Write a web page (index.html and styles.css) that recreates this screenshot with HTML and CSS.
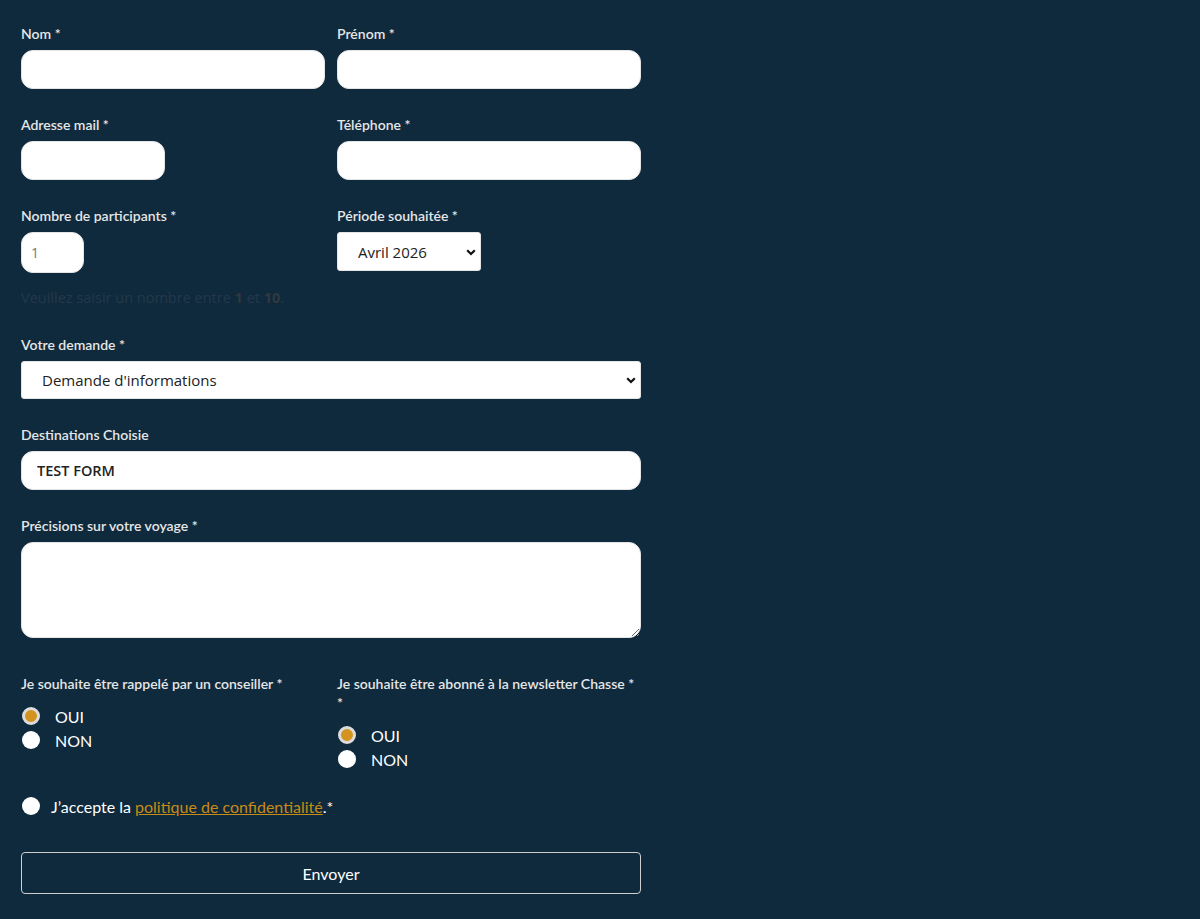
FILE: index.html
```html
<!DOCTYPE html>
<html lang="fr">
<head>
  <meta charset="UTF-8" />
  <meta name="viewport" content="width=device-width, initial-scale=1.0"/>
  <title>Demande de devis</title>
  <link rel="stylesheet" href="styles.css">
</head>
<body>
  <form class="quote-form">
    <div class="row two">
      <div class="field">
        <label class="field-label" for="nom">Nom *</label>
        <input type="text" id="nom" class="text-input">
      </div>
      <div class="field">
        <label class="field-label" for="prenom">Prénom *</label>
        <input type="text" id="prenom" class="text-input">
      </div>
    </div>

    <div class="row two">
      <div class="field">
        <label class="field-label" for="mail">Adresse mail *</label>
        <input type="email" id="mail" class="text-input short">
      </div>
      <div class="field">
        <label class="field-label" for="tel">Téléphone *</label>
        <input type="tel" id="tel" class="text-input">
      </div>
    </div>

    <div class="row two tight">
      <div class="field">
        <label class="field-label" for="nb">Nombre de participants *</label>
        <input type="number" id="nb" class="number-input" value="1" min="1" max="10">
      </div>
      <div class="field">
        <label class="field-label" for="periode">Période souhaitée *</label>
        <div class="select-wrap small">
          <select id="periode" class="select-input bold">
            <option>Avril 2026</option>
            <option>Mai 2026</option>
            <option>Juin 2026</option>
          </select>
          <svg class="chevron" width="10" height="7" viewBox="0 0 10 7"><path d="M1.2 1.2 5 5 8.8 1.2" fill="none" stroke="#111" stroke-width="2.2"/></svg>
        </div>
      </div>
    </div>
    <p class="hint">Veuillez saisir un nombre entre <b>1</b> et <b>10</b>.</p>

    <div class="row">
      <div class="field">
        <label class="field-label" for="demande">Votre demande *</label>
        <div class="select-wrap">
          <select id="demande" class="select-input">
            <option>Demande d'informations</option>
            <option>Demande de devis</option>
          </select>
          <svg class="chevron" width="10" height="7" viewBox="0 0 10 7"><path d="M1.2 1.2 5 5 8.8 1.2" fill="none" stroke="#111" stroke-width="2.2"/></svg>
        </div>
      </div>
    </div>

    <div class="row">
      <div class="field">
        <label class="field-label" for="dest">Destinations Choisie</label>
        <input type="text" id="dest" class="text-input filled" value="TEST FORM">
      </div>
    </div>

    <div class="row wide-gap">
      <div class="field">
        <label class="field-label" for="precisions">Précisions sur votre voyage *</label>
        <textarea id="precisions" class="text-area"></textarea>
      </div>
    </div>

    <div class="row two radios">
      <div class="field">
        <span class="field-label group-label">Je souhaite être rappelé par un conseiller *</span>
        <label class="radio"><input type="radio" name="rappel" checked> OUI</label>
        <label class="radio"><input type="radio" name="rappel"> NON</label>
      </div>
      <div class="field">
        <span class="field-label group-label">Je souhaite être abonné à la newsletter Chasse *<br>*</span>
        <label class="radio"><input type="radio" name="news" checked> OUI</label>
        <label class="radio"><input type="radio" name="news"> NON</label>
      </div>
    </div>

    <label class="consent"><input type="checkbox"> J’accepte la <a href="#">politique de confidentialité</a>.*</label>

    <button type="submit" class="btn-send">Envoyer</button>
  </form>
</body>
</html>
```

FILE: styles.css
```css
body
{
  margin: 0;
  padding: 26px 0 38px;
  background: #0f2a3d;
  font-family: 'Lato', 'Open Sans', sans-serif;
  color: #e8e8e8;
}
.quote-form
{
  width: 620px;
  margin-left: 21px;
}
.row
{
  margin-bottom: 28px;
}
.row.two
{
  display: grid;
  grid-template-columns: 304px 304px;
  column-gap: 12px;
}
.row.tight
{
  margin-bottom: 15px;
}
.row.wide-gap
{
  margin-bottom: 36px;
}
.field
{
  display: flex;
  flex-direction: column;
  align-items: flex-start;
}
.field-label
{
  font-size: 14px;
  font-weight: 600;
  line-height: 16px;
  margin-bottom: 8px;
  color: #e6e6e6;
}
.text-input
{
  box-sizing: border-box;
  width: 100%;
  height: 39px;
  border: 1px solid #e4e4e4;
  border-radius: 12px;
  background: #fff;
  padding: 0 15px;
  font-family: 'Open Sans', sans-serif;
  font-size: 14px;
  color: #222;
}
.text-input.short
{
  width: 144px;
}
.text-input.filled
{
  font-size: 14.5px;
  font-weight: 600;
}
.number-input
{
  box-sizing: border-box;
  width: 63px;
  height: 41px;
  border: 1px solid #e4e4e4;
  border-radius: 12px;
  padding: 0 9px;
  font-family: 'Open Sans', sans-serif;
  font-size: 14px;
  color: #777;
  background: #fff;
}
.select-wrap
{
  position: relative;
  width: 100%;
}
.select-wrap.small
{
  width: 144px;
}
.select-input
{
  appearance: none;
  box-sizing: border-box;
  width: 100%;
  height: 38px;
  border: 1px solid #e4e4e4;
  border-radius: 3px;
  background: #fff;
  padding: 0 20px;
  font-family: 'Open Sans', sans-serif;
  font-size: 15px;
  color: #222;
}
.select-input.bold
{
  height: 39px;
  font-weight: 500;
}
.chevron
{
  position: absolute;
  right: 5px;
  top: 50%;
  margin-top: -3px;
  pointer-events: none;
}
.hint
{
  margin: 0 0 29px;
  font-family: 'Open Sans', sans-serif;
  font-size: 14.5px;
  line-height: 20px;
  color: #24384a;
}
.hint b
{
  color: #30393f;
}
.text-area
{
  box-sizing: border-box;
  width: 100%;
  height: 96px;
  border: 1px solid #e4e4e4;
  border-radius: 12px;
  background: #fff;
  padding: 10px 15px;
  font-family: 'Open Sans', sans-serif;
  font-size: 14px;
}
.radios
{
  margin-bottom: 23px;
}
.group-label
{
  line-height: 19px;
  margin-bottom: 11px;
}
.radio
{
  display: flex;
  align-items: center;
  gap: 15px;
  height: 24px;
  font-size: 16px;
  color: #fff;
  margin-left: 1px;
}
.radio input,
.consent input
{
  appearance: none;
  margin: 0;
  width: 18px;
  height: 18px;
  border-radius: 50%;
  background: #fff;
  box-sizing: border-box;
}
.radio input:checked
{
  background: #d4921e;
  border: 3px solid #dcdcdc;
}
.consent
{
  display: flex;
  align-items: center;
  height: 24px;
  margin-left: 1px;
  font-size: 16px;
  color: #fff;
  margin-bottom: 34px;
}
.consent input
{
  margin-right: 11px;
}
.consent a
{
  color: #c88b16;
  text-decoration: underline;
  margin-left: 4px;
}
.btn-send
{
  display: block;
  width: 620px;
  height: 42px;
  background: transparent;
  border: 1px solid #cfcfcf;
  border-radius: 4px;
  color: #fff;
  font-family: 'Lato', sans-serif;
  font-size: 16px;
  cursor: pointer;
}
```
